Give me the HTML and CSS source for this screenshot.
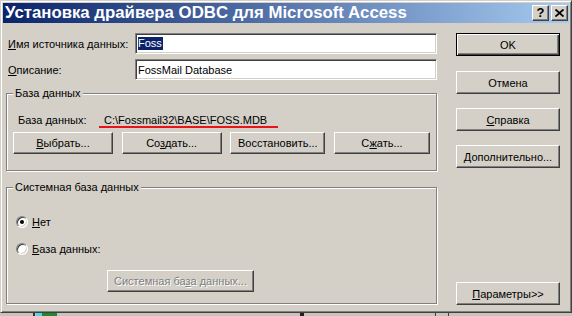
FILE: index.html
```html
<!DOCTYPE html>
<html lang="ru">
<head>
    <meta charset="UTF-8">
    <title>Установка драйвера ODBC для Microsoft Access</title>
    <link rel="stylesheet" href="styles.css">
</head>
<body>
    <div class="window">
        <div class="titlebar">
            <span class="title">Установка драйвера ODBC для Microsoft Access</span>
            <div class="caption-buttons">
                <span class="cap-btn cap-help">?</span>
                <span class="cap-btn">
                    <svg width="9" height="8" viewBox="0 0 9 8">
                        <path d="M0.5 0.5 L8.5 7.5 M8.5 0.5 L0.5 7.5" stroke="#000" stroke-width="1.8" fill="none"/>
                    </svg>
                </span>
            </div>
        </div>

        <div class="content">
            <div class="left">
                <div class="field-row">
                    <span class="field-label"><u>И</u>мя источника данных:</span>
                    <div class="edit"><span class="selected">Foss</span></div>
                </div>
                <div class="field-row second">
                    <span class="field-label"><u>О</u>писание:</span>
                    <div class="edit">FossMail Database</div>
                </div>

                <fieldset class="group group-db">
                    <legend>База данных</legend>
                    <div class="db-path-row">
                        <span class="db-label">База данных:</span>
                        <span class="db-path">C:\Fossmail32\BASE\FOSS.MDB</span>
                    </div>
                    <div class="db-buttons">
                        <button class="btn w100"><u>В</u>ыбрать...</button>
                        <button class="btn w100">Со<u>з</u>дать...</button>
                        <button class="btn w95">Восстановить...</button>
                        <button class="btn w96">С<u>ж</u>ать...</button>
                    </div>
                </fieldset>

                <fieldset class="group group-sys">
                    <legend>Системная база данных</legend>
                    <div class="radio-row">
                        <span class="radio checked"></span>
                        <span><u>Н</u>ет</span>
                    </div>
                    <div class="radio-row second">
                        <span class="radio"></span>
                        <span><u>Б</u>аза данных:</span>
                    </div>
                    <button class="btn btn-disabled" disabled>Системная ба<u>з</u>а данных...</button>
                </fieldset>
            </div>

            <div class="right">
                <button class="btn btn-default">OK</button>
                <button class="btn side first">Отмена</button>
                <button class="btn side"><u>С</u>правка</button>
                <button class="btn side"><u>Д</u>ополнительно...</button>
                <button class="btn side bottom"><u>П</u>араметры&gt;&gt;</button>
            </div>
        </div>
    </div>

    <div class="desk">
        <span class="desk-mark dark"></span>
        <span class="desk-mark cyan"></span>
        <span class="desk-mark green"></span>
        <span class="desk-mark blob"></span>
        <span class="desk-mark line"></span>
        <span class="desk-mark line2"></span>
    </div>
</body>
</html>
```

FILE: styles.css
```css
body {
    margin: 0;
    background: #d4d0c8;
    font-family: "Liberation Sans", Arial, sans-serif;
    font-size: 11px;
    color: #000;
    overflow: hidden;
}

u {
    text-decoration: underline;
    text-underline-offset: 1px;
}

.window {
    box-sizing: border-box;
    width: 572px;
    height: 313px;
    border: 1px solid;
    border-color: #d4d0c8 #404040 #404040 #d4d0c8;
    box-shadow: inset 1px 1px 0 #fff, inset -1px -1px 0 #808080;
    padding: 2px;
    background: #d4d0c8;
}

/* title bar */
.titlebar {
    height: 20px;
    display: flex;
    align-items: center;
    justify-content: space-between;
    padding: 0 1px 0 2px;
    background: linear-gradient(to right, #0a246a 0%, #a6caf0 100%);
}

.title {
    color: #fff;
    font-weight: bold;
    font-size: 16.8px;
    line-height: 20px;
    white-space: nowrap;
}

.caption-buttons {
    display: flex;
    gap: 2px;
}

.cap-btn {
    box-sizing: border-box;
    width: 17px;
    height: 16px;
    display: flex;
    align-items: center;
    justify-content: center;
    background: #d4d0c8;
    border: 1px solid;
    border-color: #fff #404040 #404040 #fff;
    box-shadow: inset -1px -1px 0 #808080;
}

.cap-help {
    font-weight: bold;
    font-size: 13px;
    line-height: 14px;
}

/* body */
.content {
    display: flex;
    gap: 19px;
    padding: 10px 0 0 3px;
}

.left {
    width: 431px;
}

.field-row {
    display: flex;
    align-items: center;
    height: 21px;
    padding-left: 2px;
}

.field-row.second {
    margin-top: 5px;
}

.field-label {
    flex: 1;
}

.edit {
    box-sizing: border-box;
    width: 302px;
    height: 21px;
    display: flex;
    align-items: center;
    padding: 0 2px;
    background: #fff;
    border: 1px solid;
    border-color: #808080 #fff #fff #808080;
    box-shadow: inset 1px 1px 0 #404040, inset -1px -1px 0 #d4d0c8;
}

.selected {
    background: #0a246a;
    color: #fff;
    line-height: 13px;
    padding: 0 1px 0 0;
}

/* group boxes */
.group {
    box-sizing: border-box;
    margin: 0;
    min-width: 0;
    padding: 14px 6px 0 6px;
    border: 1px solid #808080;
    box-shadow: 1px 1px 0 #fff, inset 1px 1px 0 #fff;
}

.group legend {
    padding: 0 2px;
    line-height: 13px;
    background: #d4d0c8;
}

.group-db {
    margin-top: 7px;
    height: 84px;
}

.group-sys {
    margin-top: 10px;
    height: 123px;
    padding-top: 21px;
}

.db-path-row {
    display: flex;
    align-items: flex-start;
    height: 13px;
    line-height: 13px;
    margin-left: 5px;
}

.db-label {
    width: 81px;
}

.db-path {
    line-height: 12px;
    padding: 0 11px 0 5px;
    border-bottom: 2px solid #e8141b;
}

.db-buttons {
    display: flex;
    justify-content: space-between;
    margin-top: 5px;
}

/* buttons */
.btn {
    box-sizing: border-box;
    height: 22px;
    padding: 0;
    font: inherit;
    color: #000;
    background: #d4d0c8;
    border: 1px solid;
    border-color: #fff #404040 #404040 #fff;
    box-shadow: inset -1px -1px 0 #808080;
    text-align: center;
}

.w100 { width: 100px; }
.w95 { width: 95px; }
.w96 { width: 96px; }

.btn-disabled {
    width: 147px;
    margin: 15px 0 0 94px;
    color: #808080;
    text-shadow: 1px 1px 0 #fff;
}

.right {
    width: 104px;
    height: 272px;
    display: flex;
    flex-direction: column;
}

.right .btn {
    width: 104px;
    height: 23px;
}

.btn-default {
    border-color: #000;
    box-shadow: inset 1px 1px 0 #fff, inset -1px -1px 0 #404040, inset -2px -2px 0 #808080;
}

.side {
    margin-top: 14px;
}

.side.first {
    margin-top: 15px;
}

.side.bottom {
    margin-top: auto;
}

/* radios */
.radio-row {
    display: flex;
    align-items: center;
    gap: 4px;
    height: 13px;
    margin-left: 3px;
}

.radio-row.second {
    margin-top: 14px;
}

.radio {
    box-sizing: border-box;
    width: 12px;
    height: 12px;
    border-radius: 50%;
    border: 1px solid;
    border-color: #808080 #fff #fff #808080;
    box-shadow: inset 1px 1px 0 #404040, inset -1px -1px 0 #d4d0c8;
    background: #fff;
    display: flex;
    align-items: center;
    justify-content: center;
}

.radio.checked::after {
    content: "";
    width: 4px;
    height: 4px;
    border-radius: 50%;
    background: #000;
}

/* bit of the desktop below the dialog */
.desk {
    display: flex;
    height: 3px;
    background: #c8c4bc;
}

.desk-mark { height: 3px; }
.desk-mark.dark { width: 2px; margin-left: 33px; background: #303030; }
.desk-mark.cyan { width: 6px; margin-left: 1px; background: #4fd8e0; }
.desk-mark.green { width: 15px; background: #1c8a2c; }
.desk-mark.blob { width: 4px; margin-left: 243px; background: #202020; }
.desk-mark.line { width: 1px; margin-left: 131px; background: #404040; }
.desk-mark.line2 { width: 1px; margin-left: 12px; background: #404040; }
```
